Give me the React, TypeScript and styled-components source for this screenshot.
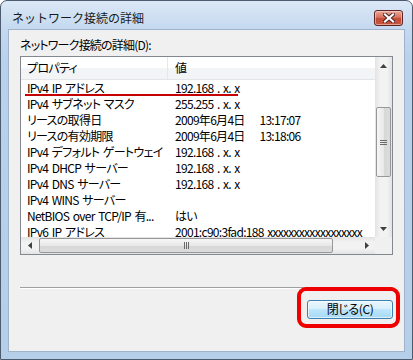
import React from "react";
import styled, { createGlobalStyle } from "styled-components";

const GlobalStyle = createGlobalStyle`
  body {
    margin: 0;
    background: #ffffff;
    font-family: "Noto Sans CJK JP", "Noto Sans", sans-serif;
  }
`;

const Window = styled.div`
  width: 413px;
  height: 360px;
  box-sizing: border-box;
  border: 1px solid #4c5b70;
  border-radius: 7px 7px 0 0;
  background: linear-gradient(#dbe8f6, #c4d9ef 28px, #b9d1ea 60px, #b6cfe9);
  display: flex;
  flex-direction: column;
`;

const TitleBar = styled.div`
  height: 28px;
  box-sizing: border-box;
  padding: 5px 9px 0 11px;
  display: flex;
  align-items: center;
  justify-content: space-between;
`;

const Title = styled.span`
  font-size: 12px;
  line-height: 14px;
  color: #1a1a1a;
`;

const CloseButton = styled.div`
  width: 29px;
  height: 16px;
  box-sizing: border-box;
  border: 1px solid #5b2624;
  border-radius: 3px;
  background: linear-gradient(#e9a99b, #d7735f 45%, #c24a35 55%, #c8573f);
  box-shadow: inset 0 0 0 1px rgba(255, 220, 210, 0.55);
  display: flex;
  align-items: center;
  justify-content: center;
`;

const Client = styled.div`
  flex: 1;
  margin: 0 7px 7px 7px;
  border: 1px solid #9fb4cc;
  background: #f0f0f0;
  padding: 8px 11px 0 11px;
  display: flex;
  flex-direction: column;
`;

const Label = styled.div`
  font-size: 12px;
  line-height: 14px;
  color: #000;
  margin-bottom: 4px;
  font-feature-settings: "palt";
  letter-spacing: -0.8px;
`;

const ListBox = styled.div`
  height: 199px;
  box-sizing: border-box;
  border: 1px solid #828790;
  background: #fff;
  display: grid;
  grid-template-columns: 1fr 17px;
  grid-template-rows: 1fr 17px;
`;

const ListArea = styled.div`
  position: relative;
  overflow: hidden;
  font-feature-settings: "palt";
  letter-spacing: -0.7px;
  word-spacing: 1.5px;
`;

const HeaderRow = styled.div`
  height: 23px;
  display: grid;
  grid-template-columns: 147px 1fr;
  background: linear-gradient(#ffffff 50%, #f3f4f6 50%);
  border-bottom: 1px solid #e2e4e8;
  box-sizing: border-box;
`;

const HeaderCell = styled.div<{ $first?: boolean }>`
  font-size: 12px;
  line-height: 22px;
  padding-left: ${(p) => (p.$first ? "6px" : "7px")};
  border-right: ${(p) => (p.$first ? "1px solid #e3e8ee" : "none")};
  color: #000;
`;

const Row = styled.div`
  height: 16px;
  display: grid;
  grid-template-columns: 147px 1fr;
  font-size: 12px;
  line-height: 16px;
  color: #000;
  white-space: nowrap;
`;

const Cell = styled.div<{ $first?: boolean }>`
  padding-left: ${(p) => (p.$first ? "6px" : "7px")};
  overflow: hidden;
`;

const Marker = styled.div`
  position: absolute;
  left: 4px;
  top: 37px;
  width: 213px;
  height: 2px;
  background: #c40000;
`;

const VScroll = styled.div`
  display: flex;
  flex-direction: column;
  background: linear-gradient(90deg, #e3e3e3, #f2f2f2 30%, #f2f2f2 70%, #e3e3e3);
`;

const HScroll = styled.div`
  display: flex;
  background: linear-gradient(#e3e3e3, #f2f2f2 30%, #f2f2f2 70%, #e3e3e3);
`;

const ArrowBox = styled.div`
  width: 17px;
  height: 17px;
  flex: none;
  display: flex;
  align-items: center;
  justify-content: center;
`;

const Thumb = styled.div<{ $vertical?: boolean }>`
  box-sizing: border-box;
  border: 1px solid #979797;
  border-radius: 2px;
  background: ${(p) =>
    p.$vertical
      ? "linear-gradient(90deg, #f6f6f6, #e8e8e8 50%, #d7d7d7 51%, #dcdcdc)"
      : "linear-gradient(#f6f6f6, #e8e8e8 50%, #d7d7d7 51%, #dcdcdc)"};
  display: flex;
  align-items: center;
  justify-content: center;
`;

const VThumb = styled(Thumb)`
  width: 15px;
  height: 70px;
  margin: 33px 1px 0 1px;
`;

const HThumb = styled(Thumb)`
  height: 15px;
  width: 294px;
  margin: 1px 0 1px 1px;
`;

const Spacer = styled.div`
  flex: 1;
`;

const Corner = styled.div`
  background: #f0f0f0;
`;

const Separator = styled.div`
  margin-top: 32px;
  border-top: 1px solid #a0a0a0;
  border-bottom: 1px solid #ffffff;
`;

const Footer = styled.div`
  display: flex;
  justify-content: flex-end;
  margin-top: 6px;
`;

const ButtonWrap = styled.div`
  position: relative;
`;

const Highlight = styled.div`
  position: absolute;
  left: -10px;
  right: -7px;
  top: -8px;
  bottom: -9px;
  border: 4px solid #ee0000;
  border-radius: 9px;
  pointer-events: none;
`;

const Button = styled.button`
  width: 86px;
  height: 19px;
  box-sizing: border-box;
  border: 1px solid #3c7fb1;
  border-radius: 3px;
  background: linear-gradient(#eaf6fd, #d9f0fc 45%, #bee6fd 50%, #a7d9f5);
  box-shadow: inset 0 0 0 1px rgba(255, 255, 255, 0.6);
  font-family: "Noto Sans CJK JP", sans-serif;
  font-feature-settings: "palt";
  letter-spacing: -0.4px;
  font-size: 12px;
  line-height: 16px;
  padding: 0;
  color: #000;
`;

const rows: [string, string][] = [
  ["IPv4 IP アドレス", "192.168 . x. x"],
  ["IPv4 サブネット マスク", "255.255 . x. x"],
  ["リースの取得日", "2009年6月4日\u3000 13:17:07"],
  ["リースの有効期限", "2009年6月4日\u3000 13:18:06"],
  ["IPv4 デフォルト ゲートウェイ", "192.168 . x. x"],
  ["IPv4 DHCP サーバー", "192.168 . x. x"],
  ["IPv4 DNS サーバー", "192.168 . x. x"],
  ["IPv4 WINS サーバー", ""],
  ["NetBIOS over TCP/IP 有...", "はい"],
  ["IPv6 IP アドレス", "2001:c90:3fad:188 xxxxxxxxxxxxxxxxxx"],
];

function Tri({ dir }: { dir: "up" | "down" | "left" | "right" }) {
  const pts = {
    up: "3.5,0 7,4 0,4",
    down: "0,0 7,0 3.5,4",
    left: "4,0 4,7 0,3.5",
    right: "0,0 4,3.5 0,7",
  }[dir];
  const vertical = dir === "up" || dir === "down";
  return (
    <svg width={vertical ? 7 : 4} height={vertical ? 4 : 7}>
      <polygon points={pts} fill="#404040" />
    </svg>
  );
}

function Grip({ vertical }: { vertical?: boolean }) {
  return vertical ? (
    <svg width="7" height="7">
      <path d="M0 1.5h7M0 3.5h7M0 5.5h7" stroke="#6b6b6b" strokeWidth="1" />
    </svg>
  ) : (
    <svg width="7" height="7">
      <path d="M1.5 0v7M3.5 0v7M5.5 0v7" stroke="#6b6b6b" strokeWidth="1" />
    </svg>
  );
}

export default function App() {
  return (
    <>
      <GlobalStyle />
      <Window>
        <TitleBar>
          <Title>ネットワーク接続の詳細</Title>
          <CloseButton>
            <svg width="12" height="10" viewBox="0 0 12 10">
              <path
                d="M2 1.5L10 8.5M10 1.5L2 8.5"
                stroke="#4a2020"
                strokeWidth="4"
                strokeLinecap="square"
              />
              <path
                d="M2 1.5L10 8.5M10 1.5L2 8.5"
                stroke="#ffffff"
                strokeWidth="2.2"
                strokeLinecap="square"
              />
            </svg>
          </CloseButton>
        </TitleBar>
        <Client>
          <Label>ネットワーク接続の詳細(D):</Label>
          <ListBox>
            <ListArea>
              <HeaderRow>
                <HeaderCell $first>プロパティ</HeaderCell>
                <HeaderCell>値</HeaderCell>
              </HeaderRow>
              {rows.map(([name, value]) => (
                <Row key={name}>
                  <Cell $first>{name}</Cell>
                  <Cell>{value}</Cell>
                </Row>
              ))}
              <Marker />
            </ListArea>
            <VScroll>
              <ArrowBox>
                <Tri dir="up" />
              </ArrowBox>
              <VThumb $vertical>
                <Grip vertical />
              </VThumb>
              <Spacer />
              <ArrowBox>
                <Tri dir="down" />
              </ArrowBox>
            </VScroll>
            <HScroll>
              <ArrowBox>
                <Tri dir="left" />
              </ArrowBox>
              <HThumb>
                <Grip />
              </HThumb>
              <Spacer />
              <ArrowBox>
                <Tri dir="right" />
              </ArrowBox>
            </HScroll>
            <Corner />
          </ListBox>
          <Separator />
          <Footer>
            <ButtonWrap>
              <Button>閉じる(C)</Button>
              <Highlight />
            </ButtonWrap>
          </Footer>
        </Client>
      </Window>
    </>
  );
}
